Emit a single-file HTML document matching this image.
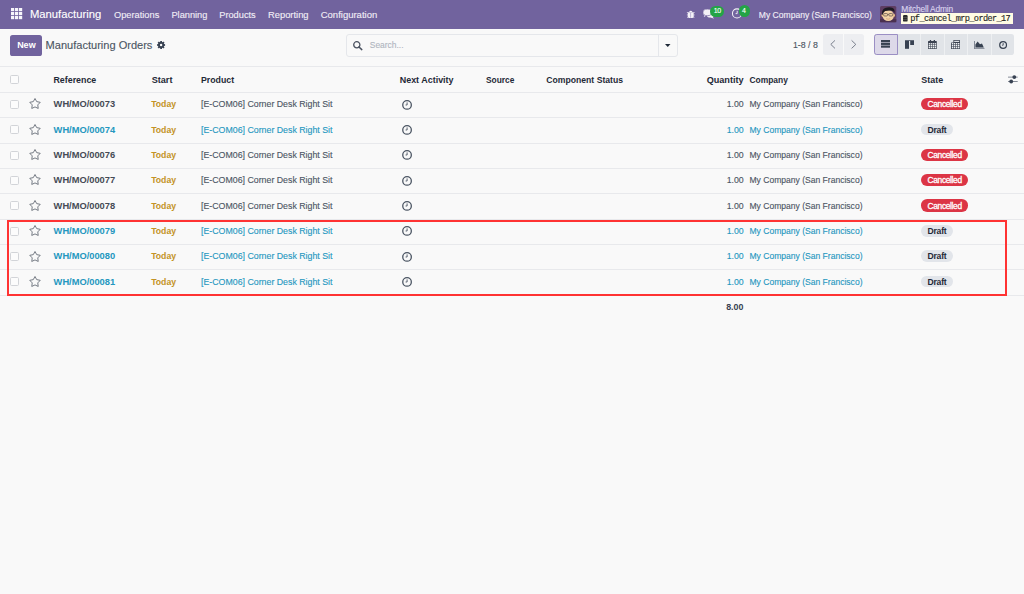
<!DOCTYPE html>
<html><head><meta charset="utf-8">
<style>
html,body{margin:0;padding:0;}
body{width:1024px;height:594px;overflow:hidden;background:#f9f9f9;position:relative;font-family:"Liberation Sans",sans-serif;}
.t{position:absolute;white-space:pre;}
.r{-webkit-text-stroke:0.12px currentColor;}
.rb{-webkit-text-stroke:0.3px currentColor;}
.abs{position:absolute;}
.nav{position:absolute;left:0;top:0;width:1024px;height:28.7px;background:#71639e;}
.cp{position:absolute;left:0;top:28.7px;width:1024px;height:37.6px;background:#f9f9f9;border-bottom:1px solid #e5e7eb;}
.hline{position:absolute;left:0;width:1024px;height:1px;background:#e8e9ec;}
.cb{position:absolute;width:7px;height:7px;border:0.9px solid #d2d4d8;border-radius:1.6px;background:#fcfcfc;left:10.1px;}
svg{position:absolute;overflow:visible;}
</style></head><body>
<div class="nav"></div>
<!-- app grid icon -->
<svg style="left:11px;top:8px" width="11.2" height="11.2" viewBox="0 0 11.2 11.2"><g fill="#f7f6fb"><rect x="0.0" y="0.0" width="3.2" height="3.2"/><rect x="4.0" y="0.0" width="3.2" height="3.2"/><rect x="8.0" y="0.0" width="3.2" height="3.2"/><rect x="0.0" y="4.0" width="3.2" height="3.2"/><rect x="4.0" y="4.0" width="3.2" height="3.2"/><rect x="8.0" y="4.0" width="3.2" height="3.2"/><rect x="0.0" y="8.0" width="3.2" height="3.2"/><rect x="4.0" y="8.0" width="3.2" height="3.2"/><rect x="8.0" y="8.0" width="3.2" height="3.2"/></g></svg>
<!-- bug icon -->
<svg style="left:684px;top:6px" width="16" height="16" viewBox="0 0 16 16">
<g fill="#f4f2f8"><path d="M5 5.9 Q6.75 3.6 8.5 5.9 Z"/><path d="M3.8 6.2 H9.7 V10.6 Q9.7 11.9 8.4 11.9 H5.1 Q3.8 11.9 3.8 10.6 Z"/>
<rect x="2.9" y="6.3" width="1" height="0.7"/><rect x="9.6" y="6.3" width="1" height="0.7"/>
<rect x="2.9" y="8.6" width="1" height="0.7"/><rect x="9.6" y="8.6" width="1" height="0.7"/>
<rect x="3.1" y="10.9" width="1" height="0.7"/><rect x="9.4" y="10.9" width="1" height="0.7"/></g>
<rect x="6.45" y="6.8" width="0.6" height="4.9" fill="#9a8fbf"/></svg>
<!-- chat icon -->
<svg style="left:702.8px;top:8.8px" width="11.2" height="10" viewBox="0 0 11.2 10">
<g fill="#f3f0f7"><ellipse cx="4.4" cy="3.4" rx="4.4" ry="3.3"/><path d="M1.5 5.5 L0.8 8 L4 6.2 Z"/>
<ellipse cx="7.4" cy="6" rx="3.6" ry="2.6" /><path d="M9.4 7.6 L11 9.8 L7.4 8.2 Z"/></g>
<ellipse cx="4.4" cy="3.4" rx="4.4" ry="3.3" fill="#f3f0f7" stroke="#71639e" stroke-width="0.7"/></svg>
<!-- badge 10 -->
<div class="abs" style="left:710.2px;top:5.5px;width:13.6px;height:11.4px;border-radius:5.7px;background:#23a446"></div>
<!-- clock icon nav -->
<svg style="left:731.6px;top:8.2px" width="10.4" height="10.8" viewBox="0 0 10.4 10.8">
<circle cx="5.0" cy="5.4" r="4.55" fill="none" stroke="#f4f2f8" stroke-width="1.05"/>
<path d="M5.2 2.8 V5.6 H3.6" fill="none" stroke="#f4f2f8" stroke-width="0.9"/></svg>
<div class="abs" style="left:738.5px;top:5.4px;width:11.8px;height:11.3px;border-radius:6px;background:#23a446"></div>
<!-- avatar -->
<svg style="left:880.3px;top:6.2px" width="16.3" height="16.3" viewBox="0 0 16 16">
<rect width="16" height="16" rx="1.5" fill="#5e3d63"/>
<path d="M0 16 L0 13 Q3 11.5 5 14 L11 14 Q13 11.5 16 13 L16 16 Z" fill="#4a3050"/>
<ellipse cx="8.1" cy="9.4" rx="5.6" ry="5.4" fill="#f1d2a6"/>
<ellipse cx="2.6" cy="9.2" rx="1.1" ry="1.6" fill="#e8c08e"/>
<ellipse cx="13.6" cy="9.2" rx="1.1" ry="1.6" fill="#e8c08e"/>
<path d="M2.1 8.6 Q1.4 3.4 5 2 Q8.5 0.6 12 1.6 Q14.8 2.6 14.2 6.8 Q13.6 4.6 11 4.4 Q8 4.2 5 4.9 Q3 5.6 2.9 8.4 Z" fill="#1c1a22"/>
<g fill="none" stroke="#5a4a48" stroke-width="0.7"><rect x="3.6" y="7.4" width="3.8" height="2.4" rx="0.9"/><rect x="8.7" y="7.4" width="3.8" height="2.4" rx="0.9"/><path d="M7.4 8.2 H8.7"/></g>
<path d="M6 12.4 Q8 13.6 10 12.4" fill="none" stroke="#c98f6a" stroke-width="0.6"/>
</svg>
<!-- db box -->
<div class="abs" style="left:901px;top:12.8px;width:111.6px;height:11px;background:#fffbe3"></div>
<svg style="left:903px;top:15px" width="4.6" height="6.6" viewBox="0 0 4.6 6.6">
<rect x="0" y="0" width="4.6" height="6.6" rx="1.2" fill="#2b2b2b"/>
<rect x="0" y="2.1" width="4.6" height="0.35" fill="#888"/><rect x="0" y="4.2" width="4.6" height="0.35" fill="#888"/></svg>

<div class="cp"></div>
<!-- New button -->
<div class="abs" style="left:10.2px;top:34.8px;width:32px;height:20.8px;border-radius:2.6px;background:#71639e"></div>
<!-- gear -->
<svg style="left:156.9px;top:41px" width="8.2" height="8" viewBox="-4.1 -4 8.2 8">
<g fill="#374151">
<circle r="3"/>
<g id="teeth"><rect x="-0.9" y="-4" width="1.8" height="8"/><rect x="-0.9" y="-4" width="1.8" height="8" transform="rotate(45)"/><rect x="-0.9" y="-4" width="1.8" height="8" transform="rotate(90)"/><rect x="-0.9" y="-4" width="1.8" height="8" transform="rotate(135)"/></g>
</g><circle r="1.2" fill="#f9f9f9"/></svg>
<!-- search box -->
<div class="abs" style="left:346px;top:34.3px;width:330px;height:21.1px;border:1px solid #e5e7eb;border-radius:3px;background:#f9f9f9"></div>
<div class="abs" style="left:658.2px;top:35px;width:1px;height:21px;background:#e5e7eb"></div>
<svg style="left:352.9px;top:40.9px" width="9.4" height="9" viewBox="0 0 9.4 9">
<circle cx="3.8" cy="3.8" r="3.1" fill="none" stroke="#4b5260" stroke-width="1.3"/>
<path d="M6 6 L8.8 8.6" stroke="#4b5260" stroke-width="1.5" stroke-linecap="round"/></svg>
<svg style="left:665.4px;top:43.7px" width="5.5" height="3.1" viewBox="0 0 5.5 3.1"><path d="M0 0 H5.5 L2.75 3.1 Z" fill="#1f2937"/></svg>
<!-- pager -->
<div class="abs" style="left:823.3px;top:34.4px;width:40.5px;height:20.2px;border-radius:2.5px;background:#edeef1"></div>
<div class="abs" style="left:843.2px;top:34.4px;width:0.8px;height:20.2px;background:#f9f9f9"></div>
<svg style="left:830.3px;top:39.8px" width="5.6" height="8.8" viewBox="0 0 5.6 8.8"><path d="M5 0.4 L0.8 4.4 L5 8.4" fill="none" stroke="#6b7280" stroke-width="0.9"/></svg>
<svg style="left:850.6px;top:39.8px" width="5.6" height="8.8" viewBox="0 0 5.6 8.8"><path d="M0.6 0.4 L4.8 4.4 L0.6 8.4" fill="none" stroke="#6b7280" stroke-width="0.9"/></svg>
<!-- view switcher -->
<div class="abs" style="left:874.2px;top:34.2px;width:139.6px;height:20.6px;border-radius:2.8px;background:#e1e4e8"></div>
<div class="abs" style="left:874.2px;top:34.2px;width:21.6px;height:19px;border-radius:2.8px 0 0 2.8px;background:#ddd9e9;border:0.8px solid #9b8fc4"></div>
<div class="abs" style="left:920.2px;top:34.2px;width:0.8px;height:20.6px;background:#eef0f2"></div>
<div class="abs" style="left:943.5px;top:34.2px;width:0.8px;height:20.6px;background:#eef0f2"></div>
<div class="abs" style="left:966.8px;top:34.2px;width:0.8px;height:20.6px;background:#eef0f2"></div>
<div class="abs" style="left:991px;top:34.2px;width:0.8px;height:20.6px;background:#eef0f2"></div>
<!-- list icon -->
<svg style="left:881.2px;top:40.1px" width="9" height="7.7" viewBox="0 0 9 7.7"><g fill="#374151"><rect y="0" width="9" height="2.2"/><rect y="2.75" width="9" height="2.2"/><rect y="5.5" width="9" height="2.2"/></g></svg>
<!-- kanban icon -->
<svg style="left:904.8px;top:39.9px" width="9" height="8.8" viewBox="0 0 9 8.8"><g fill="#374151"><rect x="0" y="0" width="9" height="1" fill="#6b7280"/><rect x="0" y="0.8" width="4" height="8"/><rect x="5.2" y="0.8" width="3.8" height="4.2"/></g></svg>
<!-- calendar icon -->
<svg style="left:928px;top:39.9px" width="8.8" height="9" viewBox="0 0 8.8 9"><rect x="0" y="1" width="8.8" height="8" rx="0.6" fill="#3b4250"/>
<rect x="0.70" y="3.10" width="1.45" height="1.4" fill="#eef0f2"/><rect x="2.70" y="3.10" width="1.45" height="1.4" fill="#eef0f2"/><rect x="4.70" y="3.10" width="1.45" height="1.4" fill="#eef0f2"/><rect x="6.70" y="3.10" width="1.45" height="1.4" fill="#eef0f2"/><rect x="0.70" y="5.00" width="1.45" height="1.4" fill="#eef0f2"/><rect x="2.70" y="5.00" width="1.45" height="1.4" fill="#eef0f2"/><rect x="4.70" y="5.00" width="1.45" height="1.4" fill="#eef0f2"/><rect x="6.70" y="5.00" width="1.45" height="1.4" fill="#eef0f2"/><rect x="0.70" y="6.90" width="1.45" height="1.4" fill="#eef0f2"/><rect x="2.70" y="6.90" width="1.45" height="1.4" fill="#eef0f2"/><rect x="4.70" y="6.90" width="1.45" height="1.4" fill="#eef0f2"/><rect x="6.70" y="6.90" width="1.45" height="1.4" fill="#eef0f2"/>
<g fill="#3b4250"><rect x="1.8" y="0" width="1.3" height="2"/><rect x="5.7" y="0" width="1.3" height="2"/></g></svg>
<!-- pivot icon -->
<svg style="left:951px;top:39.9px" width="9" height="9" viewBox="0 0 9 9"><g fill="#3b4250"><rect x="2.4" y="0" width="6.6" height="9" rx="0.5"/><rect x="0" y="2.4" width="9" height="6.6" rx="0.5"/></g>
<rect x="3.2" y="0.8" width="5" height="1.1" fill="#eef0f2"/>
<rect x="0.80" y="3.00" width="1.45" height="1.45" fill="#eef0f2"/><rect x="2.85" y="3.00" width="1.45" height="1.45" fill="#eef0f2"/><rect x="4.90" y="3.00" width="1.45" height="1.45" fill="#eef0f2"/><rect x="6.95" y="3.00" width="1.45" height="1.45" fill="#eef0f2"/><rect x="0.80" y="4.95" width="1.45" height="1.45" fill="#eef0f2"/><rect x="2.85" y="4.95" width="1.45" height="1.45" fill="#eef0f2"/><rect x="4.90" y="4.95" width="1.45" height="1.45" fill="#eef0f2"/><rect x="6.95" y="4.95" width="1.45" height="1.45" fill="#eef0f2"/><rect x="0.80" y="6.90" width="1.45" height="1.45" fill="#eef0f2"/><rect x="2.85" y="6.90" width="1.45" height="1.45" fill="#eef0f2"/><rect x="4.90" y="6.90" width="1.45" height="1.45" fill="#eef0f2"/><rect x="6.95" y="6.90" width="1.45" height="1.45" fill="#eef0f2"/></svg>
<!-- area chart -->
<svg style="left:974.1px;top:40.7px" width="10.5" height="7.7" viewBox="0 0 10.5 7.7"><g fill="#374151"><rect x="0" y="0" width="0.8" height="7.7" fill="#6b7280"/><rect x="0" y="6.9" width="10.5" height="0.8" fill="#6b7280"/>
<path d="M1.4 6.6 L1.4 3.6 L3.6 0.6 L6 3.2 L8 2.4 L9.8 6.6 Z"/></g></svg>
<!-- activity clock -->
<svg style="left:998.9px;top:40.5px" width="8.2" height="8" viewBox="0 0 8.2 8"><circle cx="4.1" cy="4" r="3.4" fill="none" stroke="#374151" stroke-width="1.2"/><path d="M4.2 2 V4.2 H3" fill="none" stroke="#374151" stroke-width="0.8"/></svg>

<!-- header checkbox -->
<div class="cb" style="top:75.3px"></div>
<!-- sliders -->
<svg style="left:1008.2px;top:75px" width="9.7" height="8.6" viewBox="0 0 9.7 8.6">
<g fill="#374151"><rect x="0" y="1.7" width="9.7" height="0.8" fill="#6b7280"/><circle cx="6.3" cy="2.1" r="1.9"/>
<rect x="0" y="6.1" width="9.7" height="0.8" fill="#6b7280"/><circle cx="3.2" cy="6.5" r="1.9"/></g></svg>

<div class="hline" style="top:66.3px"></div>
<div class="hline" style="top:91.80px"></div>
<div class="hline" style="top:117.17px"></div>
<div class="hline" style="top:142.55px"></div>
<div class="hline" style="top:167.93px"></div>
<div class="hline" style="top:193.30px"></div>
<div class="hline" style="top:218.68px"></div>
<div class="hline" style="top:244.05px"></div>
<div class="hline" style="top:269.43px"></div>
<div class="hline" style="top:294.80px"></div>
<div class="cb" style="top:99.85px"></div>
<svg style="left:28.9px;top:98.25px" width="12" height="12" viewBox="-6 -6 12 12"><path d="M0.00 -5.50 L1.71 -2.36 L5.23 -1.70 L2.77 0.90 L3.23 4.45 L0.00 2.92 L-3.23 4.45 L-2.77 0.90 L-5.23 -1.70 L-1.71 -2.36 Z" fill="none" stroke="#5f6670" stroke-width="0.85" stroke-linejoin="miter"/></svg>
<svg style="left:402.1px;top:99.50px" width="10.1" height="9.8" viewBox="0 0 10.1 9.8"><circle cx="5.05" cy="4.9" r="4.3" fill="none" stroke="#4b5563" stroke-width="1.3"/><path d="M5.1 2.4 V5 H3.6" fill="none" stroke="#4b5563" stroke-width="0.9"/></svg>
<div class="abs" style="left:921.1px;top:97.75px;width:47.1px;height:12.4px;border-radius:6.2px;background:#dc3545"></div>
<div class="cb" style="top:125.23px"></div>
<svg style="left:28.9px;top:123.63px" width="12" height="12" viewBox="-6 -6 12 12"><path d="M0.00 -5.50 L1.71 -2.36 L5.23 -1.70 L2.77 0.90 L3.23 4.45 L0.00 2.92 L-3.23 4.45 L-2.77 0.90 L-5.23 -1.70 L-1.71 -2.36 Z" fill="none" stroke="#5f6670" stroke-width="0.85" stroke-linejoin="miter"/></svg>
<svg style="left:402.1px;top:124.88px" width="10.1" height="9.8" viewBox="0 0 10.1 9.8"><circle cx="5.05" cy="4.9" r="4.3" fill="none" stroke="#4b5563" stroke-width="1.3"/><path d="M5.1 2.4 V5 H3.6" fill="none" stroke="#4b5563" stroke-width="0.9"/></svg>
<div class="abs" style="left:921.2px;top:123.53px;width:31.5px;height:11.7px;border-radius:5.9px;background:#e2e5ea"></div>
<div class="cb" style="top:150.60px"></div>
<svg style="left:28.9px;top:149.00px" width="12" height="12" viewBox="-6 -6 12 12"><path d="M0.00 -5.50 L1.71 -2.36 L5.23 -1.70 L2.77 0.90 L3.23 4.45 L0.00 2.92 L-3.23 4.45 L-2.77 0.90 L-5.23 -1.70 L-1.71 -2.36 Z" fill="none" stroke="#5f6670" stroke-width="0.85" stroke-linejoin="miter"/></svg>
<svg style="left:402.1px;top:150.25px" width="10.1" height="9.8" viewBox="0 0 10.1 9.8"><circle cx="5.05" cy="4.9" r="4.3" fill="none" stroke="#4b5563" stroke-width="1.3"/><path d="M5.1 2.4 V5 H3.6" fill="none" stroke="#4b5563" stroke-width="0.9"/></svg>
<div class="abs" style="left:921.1px;top:148.50px;width:47.1px;height:12.4px;border-radius:6.2px;background:#dc3545"></div>
<div class="cb" style="top:175.98px"></div>
<svg style="left:28.9px;top:174.38px" width="12" height="12" viewBox="-6 -6 12 12"><path d="M0.00 -5.50 L1.71 -2.36 L5.23 -1.70 L2.77 0.90 L3.23 4.45 L0.00 2.92 L-3.23 4.45 L-2.77 0.90 L-5.23 -1.70 L-1.71 -2.36 Z" fill="none" stroke="#5f6670" stroke-width="0.85" stroke-linejoin="miter"/></svg>
<svg style="left:402.1px;top:175.62px" width="10.1" height="9.8" viewBox="0 0 10.1 9.8"><circle cx="5.05" cy="4.9" r="4.3" fill="none" stroke="#4b5563" stroke-width="1.3"/><path d="M5.1 2.4 V5 H3.6" fill="none" stroke="#4b5563" stroke-width="0.9"/></svg>
<div class="abs" style="left:921.1px;top:173.88px;width:47.1px;height:12.4px;border-radius:6.2px;background:#dc3545"></div>
<div class="cb" style="top:201.35px"></div>
<svg style="left:28.9px;top:199.75px" width="12" height="12" viewBox="-6 -6 12 12"><path d="M0.00 -5.50 L1.71 -2.36 L5.23 -1.70 L2.77 0.90 L3.23 4.45 L0.00 2.92 L-3.23 4.45 L-2.77 0.90 L-5.23 -1.70 L-1.71 -2.36 Z" fill="none" stroke="#5f6670" stroke-width="0.85" stroke-linejoin="miter"/></svg>
<svg style="left:402.1px;top:201.00px" width="10.1" height="9.8" viewBox="0 0 10.1 9.8"><circle cx="5.05" cy="4.9" r="4.3" fill="none" stroke="#4b5563" stroke-width="1.3"/><path d="M5.1 2.4 V5 H3.6" fill="none" stroke="#4b5563" stroke-width="0.9"/></svg>
<div class="abs" style="left:921.1px;top:199.25px;width:47.1px;height:12.4px;border-radius:6.2px;background:#dc3545"></div>
<div class="cb" style="top:226.73px"></div>
<svg style="left:28.9px;top:225.12px" width="12" height="12" viewBox="-6 -6 12 12"><path d="M0.00 -5.50 L1.71 -2.36 L5.23 -1.70 L2.77 0.90 L3.23 4.45 L0.00 2.92 L-3.23 4.45 L-2.77 0.90 L-5.23 -1.70 L-1.71 -2.36 Z" fill="none" stroke="#5f6670" stroke-width="0.85" stroke-linejoin="miter"/></svg>
<svg style="left:402.1px;top:226.38px" width="10.1" height="9.8" viewBox="0 0 10.1 9.8"><circle cx="5.05" cy="4.9" r="4.3" fill="none" stroke="#4b5563" stroke-width="1.3"/><path d="M5.1 2.4 V5 H3.6" fill="none" stroke="#4b5563" stroke-width="0.9"/></svg>
<div class="abs" style="left:921.2px;top:225.03px;width:31.5px;height:11.7px;border-radius:5.9px;background:#e2e5ea"></div>
<div class="cb" style="top:252.10px"></div>
<svg style="left:28.9px;top:250.50px" width="12" height="12" viewBox="-6 -6 12 12"><path d="M0.00 -5.50 L1.71 -2.36 L5.23 -1.70 L2.77 0.90 L3.23 4.45 L0.00 2.92 L-3.23 4.45 L-2.77 0.90 L-5.23 -1.70 L-1.71 -2.36 Z" fill="none" stroke="#5f6670" stroke-width="0.85" stroke-linejoin="miter"/></svg>
<svg style="left:402.1px;top:251.75px" width="10.1" height="9.8" viewBox="0 0 10.1 9.8"><circle cx="5.05" cy="4.9" r="4.3" fill="none" stroke="#4b5563" stroke-width="1.3"/><path d="M5.1 2.4 V5 H3.6" fill="none" stroke="#4b5563" stroke-width="0.9"/></svg>
<div class="abs" style="left:921.2px;top:250.40px;width:31.5px;height:11.7px;border-radius:5.9px;background:#e2e5ea"></div>
<div class="cb" style="top:277.48px"></div>
<svg style="left:28.9px;top:275.88px" width="12" height="12" viewBox="-6 -6 12 12"><path d="M0.00 -5.50 L1.71 -2.36 L5.23 -1.70 L2.77 0.90 L3.23 4.45 L0.00 2.92 L-3.23 4.45 L-2.77 0.90 L-5.23 -1.70 L-1.71 -2.36 Z" fill="none" stroke="#5f6670" stroke-width="0.85" stroke-linejoin="miter"/></svg>
<svg style="left:402.1px;top:277.13px" width="10.1" height="9.8" viewBox="0 0 10.1 9.8"><circle cx="5.05" cy="4.9" r="4.3" fill="none" stroke="#4b5563" stroke-width="1.3"/><path d="M5.1 2.4 V5 H3.6" fill="none" stroke="#4b5563" stroke-width="0.9"/></svg>
<div class="abs" style="left:921.2px;top:275.78px;width:31.5px;height:11.7px;border-radius:5.9px;background:#e2e5ea"></div>
<div class="t r" style="left:29.96px;top:9px;font-size:11.25px;line-height:11.25px;font-weight:400;color:#ffffff;font-family:'Liberation Sans'">Manufacturing</div>
<div class="t r" style="left:114.02px;top:11px;font-size:9.25px;line-height:9.25px;font-weight:400;color:#f1eef6;font-family:'Liberation Sans'">Operations</div>
<div class="t r" style="left:171.42px;top:11px;font-size:9.25px;line-height:9.25px;font-weight:400;color:#f1eef6;font-family:'Liberation Sans'">Planning</div>
<div class="t r" style="left:219.22px;top:11px;font-size:9.25px;line-height:9.25px;font-weight:400;color:#f1eef6;font-family:'Liberation Sans'">Products</div>
<div class="t r" style="left:268.02px;top:11px;font-size:9.35px;line-height:9.35px;font-weight:400;color:#f1eef6;font-family:'Liberation Sans'">Reporting</div>
<div class="t r" style="left:320.71px;top:10px;font-size:9.5px;line-height:9.5px;font-weight:400;color:#f1eef6;font-family:'Liberation Sans'">Configuration</div>
<div class="t r" style="left:758.84px;top:11px;font-size:8.55px;line-height:8.55px;font-weight:400;color:#f1eef6;font-family:'Liberation Sans'">My Company (San Francisco)</div>
<div class="t r" style="left:901.35px;top:5px;font-size:8.4px;line-height:8.4px;letter-spacing:-0.173px;font-weight:400;color:#dcd5ef;font-family:'Liberation Sans'">Mitchell Admin</div>
<div class="t r" style="left:910.34px;top:15px;font-size:8.6px;line-height:8.6px;letter-spacing:-0.620px;font-weight:400;color:#1e1e1e;font-family:'Liberation Mono'">pf_cancel_mrp_order_17</div>
<div class="t r" style="left:713.79px;top:7px;font-size:7.0px;line-height:7.0px;letter-spacing:-0.366px;font-weight:400;color:#ffffff;font-family:'Liberation Sans'">10</div>
<div class="t r" style="left:742.09px;top:7px;font-size:7.0px;line-height:7.0px;letter-spacing:0.026px;font-weight:400;color:#ffffff;font-family:'Liberation Sans'">4</div>
<div class="t" style="left:17.13px;top:41px;font-size:9.0px;line-height:9.0px;font-weight:700;color:#ffffff;font-family:'Liberation Sans'">New</div>
<div class="t r" style="left:45.57px;top:40px;font-size:11.05px;line-height:11.05px;font-weight:400;color:#4b5563;font-family:'Liberation Sans'">Manufacturing Orders</div>
<div class="t r" style="left:369.75px;top:41px;font-size:8.45px;line-height:8.45px;font-weight:400;color:#b0b6bf;font-family:'Liberation Sans'">Search...</div>
<div class="t r" style="left:792.94px;top:41px;font-size:8.8px;line-height:8.8px;font-weight:400;color:#4b5563;font-family:'Liberation Sans'">1-8 / 8</div>
<div class="t" style="left:53.48px;top:76px;font-size:8.85px;line-height:8.85px;font-weight:700;color:#1f2937;font-family:'Liberation Sans'">Reference</div>
<div class="t" style="left:151.63px;top:76px;font-size:9.15px;line-height:9.15px;font-weight:700;color:#1f2937;font-family:'Liberation Sans'">Start</div>
<div class="t" style="left:200.99px;top:76px;font-size:8.75px;line-height:8.75px;font-weight:700;color:#1f2937;font-family:'Liberation Sans'">Product</div>
<div class="t" style="left:399.73px;top:76px;font-size:8.95px;line-height:8.95px;font-weight:700;color:#1f2937;font-family:'Liberation Sans'">Next Activity</div>
<div class="t" style="left:486.00px;top:76px;font-size:8.35px;line-height:8.35px;font-weight:700;color:#1f2937;font-family:'Liberation Sans'">Source</div>
<div class="t" style="left:546.34px;top:76px;font-size:8.65px;line-height:8.65px;font-weight:700;color:#1f2937;font-family:'Liberation Sans'">Component Status</div>
<div class="t" style="left:706.63px;top:76px;font-size:9.15px;line-height:9.15px;font-weight:700;color:#1f2937;font-family:'Liberation Sans'">Quantity</div>
<div class="t" style="left:749.45px;top:76px;font-size:8.45px;line-height:8.45px;font-weight:700;color:#1f2937;font-family:'Liberation Sans'">Company</div>
<div class="t" style="left:921.33px;top:76px;font-size:8.95px;line-height:8.95px;font-weight:700;color:#1f2937;font-family:'Liberation Sans'">State</div>
<div class="t" style="left:53.62px;top:100px;font-size:9.3px;line-height:9.3px;font-weight:700;color:#454b55;font-family:'Liberation Sans'">WH/MO/00073</div>
<div class="t" style="left:151.14px;top:100px;font-size:8.7px;line-height:8.7px;font-weight:700;color:#c39326;font-family:'Liberation Sans'">Today</div>
<div class="t r" style="left:200.99px;top:100px;font-size:8.8px;line-height:8.8px;font-weight:400;color:#4b5563;font-family:'Liberation Sans'">[E-COM06] Corner Desk Right Sit</div>
<div class="t r" style="left:726.64px;top:100px;font-size:8.75px;line-height:8.75px;font-weight:400;color:#4b5563;font-family:'Liberation Sans'">1.00</div>
<div class="t r" style="left:749.44px;top:100px;font-size:8.55px;line-height:8.55px;font-weight:400;color:#4b5563;font-family:'Liberation Sans'">My Company (San Francisco)</div>
<div class="t rb" style="left:927.55px;top:100px;font-size:8.4px;line-height:8.4px;letter-spacing:-0.344px;font-weight:400;color:#ffffff;font-family:'Liberation Sans'">Cancelled</div>
<div class="t" style="left:53.62px;top:126px;font-size:9.3px;line-height:9.3px;font-weight:700;color:#2497bf;font-family:'Liberation Sans'">WH/MO/00074</div>
<div class="t" style="left:151.14px;top:126px;font-size:8.7px;line-height:8.7px;font-weight:700;color:#c39326;font-family:'Liberation Sans'">Today</div>
<div class="t r" style="left:200.99px;top:126px;font-size:8.8px;line-height:8.8px;font-weight:400;color:#2497bf;font-family:'Liberation Sans'">[E-COM06] Corner Desk Right Sit</div>
<div class="t r" style="left:726.64px;top:126px;font-size:8.75px;line-height:8.75px;font-weight:400;color:#2497bf;font-family:'Liberation Sans'">1.00</div>
<div class="t r" style="left:749.44px;top:126px;font-size:8.55px;line-height:8.55px;font-weight:400;color:#2497bf;font-family:'Liberation Sans'">My Company (San Francisco)</div>
<div class="t" style="left:927.54px;top:126px;font-size:8.6px;line-height:8.6px;letter-spacing:-0.238px;font-weight:700;color:#1f2937;font-family:'Liberation Sans'">Draft</div>
<div class="t" style="left:53.62px;top:151px;font-size:9.3px;line-height:9.3px;font-weight:700;color:#454b55;font-family:'Liberation Sans'">WH/MO/00076</div>
<div class="t" style="left:151.14px;top:151px;font-size:8.7px;line-height:8.7px;font-weight:700;color:#c39326;font-family:'Liberation Sans'">Today</div>
<div class="t r" style="left:200.99px;top:151px;font-size:8.8px;line-height:8.8px;font-weight:400;color:#4b5563;font-family:'Liberation Sans'">[E-COM06] Corner Desk Right Sit</div>
<div class="t r" style="left:726.64px;top:151px;font-size:8.75px;line-height:8.75px;font-weight:400;color:#4b5563;font-family:'Liberation Sans'">1.00</div>
<div class="t r" style="left:749.44px;top:151px;font-size:8.55px;line-height:8.55px;font-weight:400;color:#4b5563;font-family:'Liberation Sans'">My Company (San Francisco)</div>
<div class="t rb" style="left:927.55px;top:151px;font-size:8.4px;line-height:8.4px;letter-spacing:-0.344px;font-weight:400;color:#ffffff;font-family:'Liberation Sans'">Cancelled</div>
<div class="t" style="left:53.62px;top:176px;font-size:9.3px;line-height:9.3px;font-weight:700;color:#454b55;font-family:'Liberation Sans'">WH/MO/00077</div>
<div class="t" style="left:151.14px;top:176px;font-size:8.7px;line-height:8.7px;font-weight:700;color:#c39326;font-family:'Liberation Sans'">Today</div>
<div class="t r" style="left:200.99px;top:176px;font-size:8.8px;line-height:8.8px;font-weight:400;color:#4b5563;font-family:'Liberation Sans'">[E-COM06] Corner Desk Right Sit</div>
<div class="t r" style="left:726.64px;top:176px;font-size:8.75px;line-height:8.75px;font-weight:400;color:#4b5563;font-family:'Liberation Sans'">1.00</div>
<div class="t r" style="left:749.44px;top:176px;font-size:8.55px;line-height:8.55px;font-weight:400;color:#4b5563;font-family:'Liberation Sans'">My Company (San Francisco)</div>
<div class="t rb" style="left:927.55px;top:176px;font-size:8.4px;line-height:8.4px;letter-spacing:-0.344px;font-weight:400;color:#ffffff;font-family:'Liberation Sans'">Cancelled</div>
<div class="t" style="left:53.62px;top:202px;font-size:9.3px;line-height:9.3px;font-weight:700;color:#454b55;font-family:'Liberation Sans'">WH/MO/00078</div>
<div class="t" style="left:151.14px;top:202px;font-size:8.7px;line-height:8.7px;font-weight:700;color:#c39326;font-family:'Liberation Sans'">Today</div>
<div class="t r" style="left:200.99px;top:202px;font-size:8.8px;line-height:8.8px;font-weight:400;color:#4b5563;font-family:'Liberation Sans'">[E-COM06] Corner Desk Right Sit</div>
<div class="t r" style="left:726.64px;top:202px;font-size:8.75px;line-height:8.75px;font-weight:400;color:#4b5563;font-family:'Liberation Sans'">1.00</div>
<div class="t r" style="left:749.44px;top:202px;font-size:8.55px;line-height:8.55px;font-weight:400;color:#4b5563;font-family:'Liberation Sans'">My Company (San Francisco)</div>
<div class="t rb" style="left:927.55px;top:202px;font-size:8.4px;line-height:8.4px;letter-spacing:-0.344px;font-weight:400;color:#ffffff;font-family:'Liberation Sans'">Cancelled</div>
<div class="t" style="left:53.62px;top:227px;font-size:9.3px;line-height:9.3px;font-weight:700;color:#2497bf;font-family:'Liberation Sans'">WH/MO/00079</div>
<div class="t" style="left:151.14px;top:227px;font-size:8.7px;line-height:8.7px;font-weight:700;color:#c39326;font-family:'Liberation Sans'">Today</div>
<div class="t r" style="left:200.99px;top:227px;font-size:8.8px;line-height:8.8px;font-weight:400;color:#2497bf;font-family:'Liberation Sans'">[E-COM06] Corner Desk Right Sit</div>
<div class="t r" style="left:726.64px;top:227px;font-size:8.75px;line-height:8.75px;font-weight:400;color:#2497bf;font-family:'Liberation Sans'">1.00</div>
<div class="t r" style="left:749.44px;top:227px;font-size:8.55px;line-height:8.55px;font-weight:400;color:#2497bf;font-family:'Liberation Sans'">My Company (San Francisco)</div>
<div class="t" style="left:927.54px;top:227px;font-size:8.6px;line-height:8.6px;letter-spacing:-0.238px;font-weight:700;color:#1f2937;font-family:'Liberation Sans'">Draft</div>
<div class="t" style="left:53.62px;top:252px;font-size:9.3px;line-height:9.3px;font-weight:700;color:#2497bf;font-family:'Liberation Sans'">WH/MO/00080</div>
<div class="t" style="left:151.14px;top:252px;font-size:8.7px;line-height:8.7px;font-weight:700;color:#c39326;font-family:'Liberation Sans'">Today</div>
<div class="t r" style="left:200.99px;top:252px;font-size:8.8px;line-height:8.8px;font-weight:400;color:#2497bf;font-family:'Liberation Sans'">[E-COM06] Corner Desk Right Sit</div>
<div class="t r" style="left:726.64px;top:252px;font-size:8.75px;line-height:8.75px;font-weight:400;color:#2497bf;font-family:'Liberation Sans'">1.00</div>
<div class="t r" style="left:749.44px;top:252px;font-size:8.55px;line-height:8.55px;font-weight:400;color:#2497bf;font-family:'Liberation Sans'">My Company (San Francisco)</div>
<div class="t" style="left:927.54px;top:252px;font-size:8.6px;line-height:8.6px;letter-spacing:-0.238px;font-weight:700;color:#1f2937;font-family:'Liberation Sans'">Draft</div>
<div class="t" style="left:53.62px;top:278px;font-size:9.3px;line-height:9.3px;font-weight:700;color:#2497bf;font-family:'Liberation Sans'">WH/MO/00081</div>
<div class="t" style="left:151.14px;top:278px;font-size:8.7px;line-height:8.7px;font-weight:700;color:#c39326;font-family:'Liberation Sans'">Today</div>
<div class="t r" style="left:200.99px;top:278px;font-size:8.8px;line-height:8.8px;font-weight:400;color:#2497bf;font-family:'Liberation Sans'">[E-COM06] Corner Desk Right Sit</div>
<div class="t r" style="left:726.64px;top:278px;font-size:8.75px;line-height:8.75px;font-weight:400;color:#2497bf;font-family:'Liberation Sans'">1.00</div>
<div class="t r" style="left:749.44px;top:278px;font-size:8.55px;line-height:8.55px;font-weight:400;color:#2497bf;font-family:'Liberation Sans'">My Company (San Francisco)</div>
<div class="t" style="left:927.54px;top:278px;font-size:8.6px;line-height:8.6px;letter-spacing:-0.238px;font-weight:700;color:#1f2937;font-family:'Liberation Sans'">Draft</div>
<div class="t" style="left:726.13px;top:303px;font-size:8.85px;line-height:8.85px;font-weight:700;color:#374151;font-family:'Liberation Sans'">8.00</div>
<!-- red highlight -->
<div class="abs" style="left:7.25px;top:219.95px;width:995.7px;height:71.8px;border:2.1px solid #ff3333;"></div>
</body></html>
